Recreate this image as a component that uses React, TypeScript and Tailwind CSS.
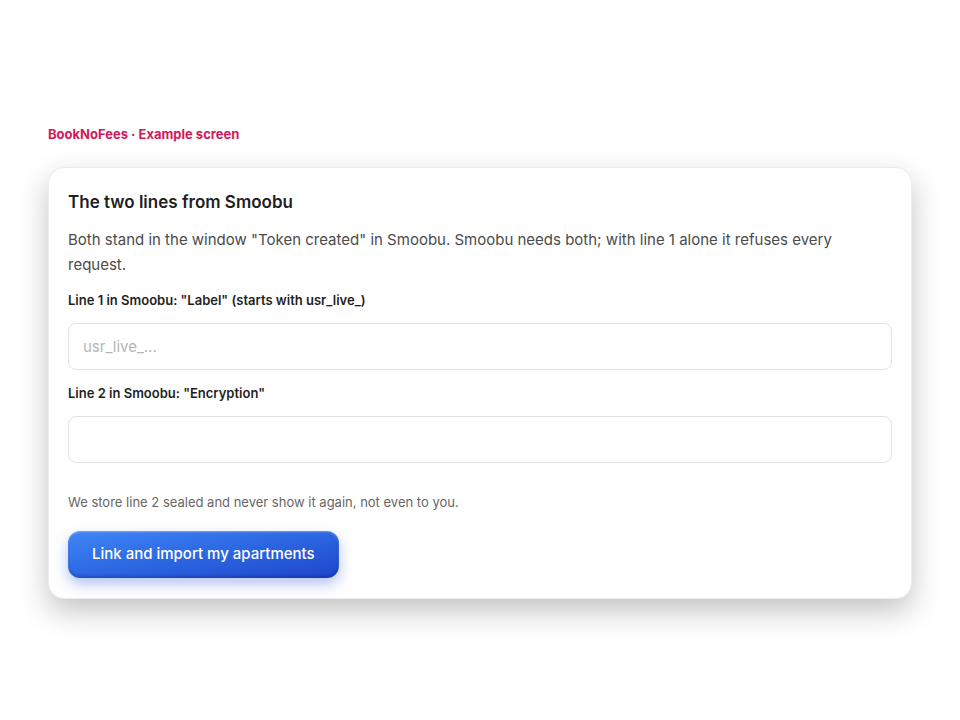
import React from 'react';

const App: React.FC = () => {
  return (
    <div
      className="min-h-screen bg-white flex flex-col justify-center px-12 pt-[3px]"
      style={{ fontFamily: 'Inter, "Noto Sans", sans-serif' }}
    >
      {/* Caption */}
      <div className="text-[13px] font-bold text-[#d3185a] mb-[24px] leading-[18px]">
        BookNoFees · Example screen
      </div>

      {/* Card */}
      <div className="bg-white rounded-2xl border border-[#ececec] shadow-[0_12px_30px_rgba(0,0,0,0.24)] px-[19px] pt-[22px] pb-5">
        <h2 className="text-[17px] font-semibold text-[#1f1f1f] leading-[24px]">
          The two lines from Smoobu
        </h2>
        <p className="mt-[13px] text-[15px] leading-[25px] text-[#4b4b4b]">
          Both stand in the window "Token created" in Smoobu. Smoobu needs both; with line 1 alone it refuses every request.
        </p>

        <label className="block mt-[13px] text-[13px] font-semibold text-[#1f1f1f] leading-[20px]">
          Line 1 in Smoobu: "Label" (starts with usr_live_)
        </label>
        <input
          type="text"
          placeholder="usr_live_..."
          className="mt-[13px] block w-full h-[47px] rounded-lg border border-[#e2e2e2] px-[14px] text-[15px] text-[#1f1f1f] placeholder:text-[#b5b5b5] outline-none"
        />

        <label className="block mt-[13px] text-[13px] font-semibold text-[#1f1f1f] leading-[20px]">
          Line 2 in Smoobu: "Encryption"
        </label>
        <input
          type="password"
          className="mt-[13px] block w-full h-[47px] rounded-lg border border-[#e2e2e2] px-[14px] text-[15px] outline-none"
        />

        <p className="mt-[29px] text-[13px] text-[#666] leading-[20px]">
          We store line 2 sealed and never show it again, not even to you.
        </p>

        <button className="mt-[19px] h-[47px] px-[24px] rounded-[12px] text-white text-[15px] font-medium bg-gradient-to-br from-[#3f86f7] to-[#1f45cc] shadow-[0_6px_14px_rgba(37,78,220,0.35),inset_0_1px_2px_rgba(255,255,255,0.35),inset_0_-2px_3px_rgba(0,0,60,0.25)]">
          Link and import my apartments
        </button>
      </div>
    </div>
  );
};

export default App;
